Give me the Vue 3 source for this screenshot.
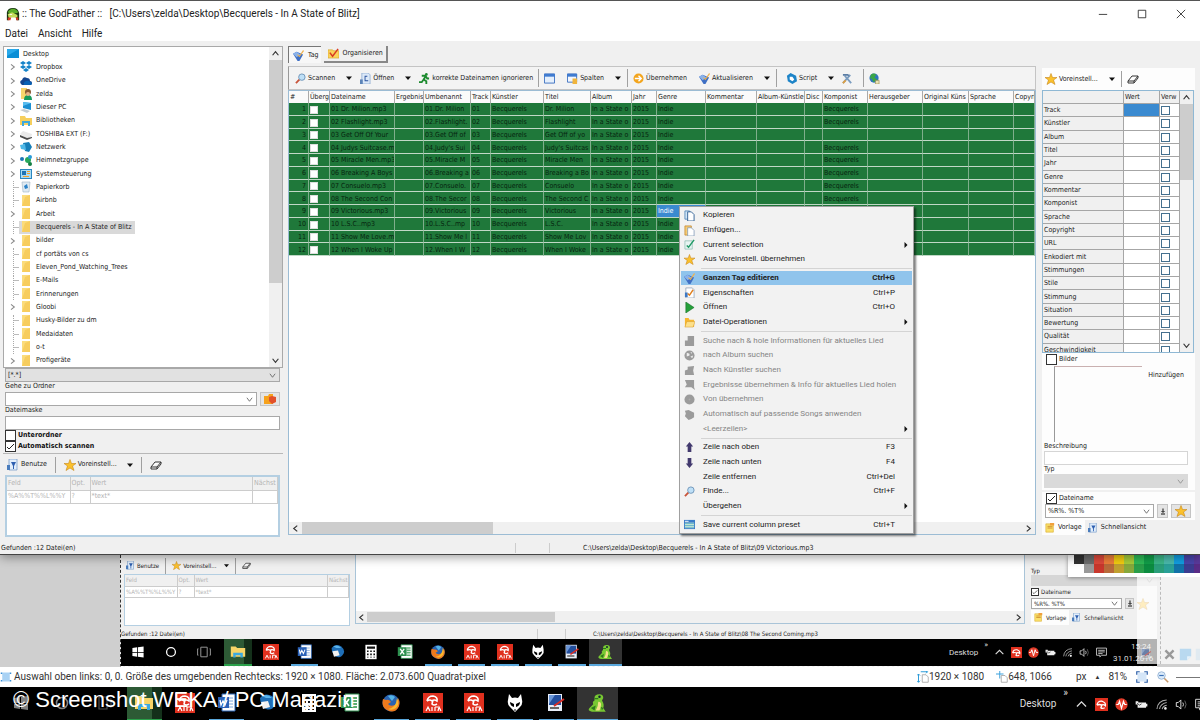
<script setup>
import { h, ref } from 'vue'

// small svg icon, drawn from the symbols at the top of the template
const Ico = (props) => h('svg', { class: 'ico', 'aria-hidden': 'true' }, [h('use', { href: '#i-' + props.name })])
Ico.props = ['name']

const tree = [
  { name: 'Dropbox', icon: 'dropbox', open: true },
  { name: 'OneDrive', icon: 'cloud', open: true },
  { name: 'zelda', icon: 'user', open: true },
  { name: 'Dieser PC', icon: 'pc', open: true },
  { name: 'Bibliotheken', icon: 'library', open: true },
  { name: 'TOSHIBA EXT (F:)', icon: 'drive', open: true },
  { name: 'Netzwerk', icon: 'network', open: true },
  { name: 'Heimnetzgruppe', icon: 'homegroup', open: true },
  { name: 'Systemsteuerung', icon: 'control', open: true },
  { name: 'Papierkorb', icon: 'bin' },
  { name: 'Airbnb', icon: 'folder' },
  { name: 'Arbeit', icon: 'folder', open: true },
  { name: 'Becquerels - In A State of Blitz', icon: 'folder', selected: true },
  { name: 'bilder', icon: 'folder', open: true },
  { name: 'cf portäts von cs', icon: 'folder' },
  { name: 'Eleven_Pond_Watching_Trees', icon: 'folder' },
  { name: 'E-Mails', icon: 'folder' },
  { name: 'Erinnerungen', icon: 'folder' },
  { name: 'Gloobi', icon: 'folder', open: true },
  { name: 'Husky-Bilder zu dm', icon: 'folder' },
  { name: 'Medaidaten', icon: 'folder' },
  { name: 'o-t', icon: 'folder' },
  { name: 'Profigeräte', icon: 'folder', open: true },
]

const columns = [
  { label: '#', width: 20 },
  { label: 'Überg', width: 21 },
  { label: 'Dateiname', width: 65 },
  { label: 'Ergebnis', width: 29 },
  { label: 'Umbenannt', width: 47 },
  { label: 'Track', width: 20 },
  { label: 'Künstler', width: 53 },
  { label: 'Titel', width: 47 },
  { label: 'Album', width: 41 },
  { label: 'Jahr', width: 25 },
  { label: 'Genre', width: 49 },
  { label: 'Kommentar', width: 51 },
  { label: 'Album-Künstle', width: 48 },
  { label: 'Disc', width: 18 },
  { label: 'Komponist', width: 45 },
  { label: 'Herausgeber', width: 55 },
  { label: 'Original Küns', width: 46 },
  { label: 'Sprache', width: 45 },
  { label: 'Copyri' },
]

const songs = [
  ['01 Dr. Milion.mp3', '01.Dr. Milion', 'Dr. Milion', true],
  ['02 Flashlight.mp3', '02.Flashlight.', 'Flashlight', true],
  ['03 Get Off Of Your', '03.Get Off of', 'Get Off of yo', false],
  ['04 Judys Suitcase.m', "04.Judy's Sui", "Judy's Suitcas", true],
  ['05 Miracle Men.mp3', '05.Miracle M', 'Miracle Men', true],
  ['06 Breaking A Boys', '06.Breaking a', 'Breaking a Bo', true],
  ['07 Consuelo.mp3', '07.Consuelo.', 'Consuelo', true],
  ['08 The Second Con', '08.The Secor', 'The Second C', true],
  ['09 Victorious.mp3', '09.Victorious', 'Victorious', false],
  ['10 L.S.C..mp3', '10.L.S.C..mp', 'L.S.C.', false],
  ['11 Show Me Love.m', '11.Show Me l', 'Show Me Lov', false],
  ['12 When I Woke Up', '12.When I W', 'When I Woke', false],
].map(([file, renamed, title, composer], i) => {
  const nr = String(i + 1).padStart(2, '0')
  return [file, '', renamed, nr, 'Becquerels', title, 'In a State o', '2015', 'Indie', '', '', '',
    composer ? 'Becquerels' : '', '', '', '', '']
})

const fields = ['Track', 'Künstler', 'Album', 'Titel', 'Jahr', 'Genre', 'Kommentar', 'Komponist', 'Sprache',
  'Copyright', 'URL', 'Enkodiert mit', 'Stimmungen', 'Stile', 'Stimmung', 'Situation', 'Bewertung', 'Qualität',
  'Geschwindigkeit']

const menu = [
  { label: 'Kopieren', icon: 'copy' },
  { label: 'Einfügen...', icon: 'paste' },
  { label: 'Current selection', icon: 'selection', sub: true },
  { label: 'Aus Voreinstell. übernehmen', icon: 'star' },
  { sep: true },
  { label: 'Ganzen Tag editieren', icon: 'tag', key: 'Ctrl+G', active: true },
  { label: 'Eigenschaften', icon: 'props', key: 'Ctrl+P' },
  { label: 'Öffnen', icon: 'play', key: 'Ctrl+O' },
  { label: 'Datei-Operationen', icon: 'openfolder', sub: true },
  { sep: true },
  { label: 'Suche nach & hole Informationen für aktuelles Lied', icon: 'g-doc', off: true },
  { label: 'nach Album suchen', icon: 'g-globe', off: true },
  { label: 'Nach Künstler suchen', icon: 'g-people', off: true },
  { label: 'Ergebnisse übernehmen & Info für aktuelles Lied holen', icon: 'g-search', off: true },
  { label: 'Von übernehmen', icon: 'g-disc', off: true },
  { label: 'Automatisch auf passende Songs anwenden', icon: 'g-gear', off: true },
  { label: '<Leerzeilen>', off: true, sub: true },
  { sep: true },
  { label: 'Zeile nach oben', icon: 'up', key: 'F3' },
  { label: 'Zeile nach unten', icon: 'down', key: 'F4' },
  { label: 'Zeile entfernen', key: 'Ctrl+Del' },
  { label: 'Finde...', icon: 'find', key: 'Ctrl+F' },
  { label: 'Übergehen', sub: true },
  { sep: true },
  { label: 'Save current column preset', icon: 'preset', key: 'Ctrl+T' },
]

const apps = [
  { icon: 'windows', name: 'Start' },
  { icon: 'circle', name: 'Cortana' },
  { icon: 'taskview', name: 'Taskansicht' },
  { icon: 'explorer', name: 'Explorer', state: 'files' },
  { icon: 'avira', name: 'Avira' },
  { icon: 'word', name: 'Word', state: 'running' },
  { icon: 'mail', name: 'Mail' },
  { icon: 'calc', name: 'Rechner' },
  { icon: 'excel', name: 'Excel' },
  { icon: 'firefox', name: 'Firefox', state: 'running' },
  { icon: 'avira', name: 'Avira', state: 'running' },
  { icon: 'avira', name: 'Avira', state: 'running' },
  { icon: 'alien', name: 'Foobar', state: 'running' },
  { icon: 'paint', name: 'Paint', state: 'running' },
  { icon: 'dino', name: 'GodFather', state: 'running current' },
]
const tray = ['caret', 'umbrella', 'pulse', 'battery', 'wifi', 'speaker', 'note']

const swatches = [
  '#333', '#6e6e6e', '#e04a3c', '#f0803a', '#f5cf10', '#a8cf3a', '#2ebd58', '#12a04a', '#3cb88a', '#4cbcae', '#12a0e4', '#4a46ac', '#5a3a9c',
  '#fff', '#999', '#c8372c', '#b86a3a', '#c0a030', '#86a83c', '#2a9e4a', '#0c8c40', '#2a9e7a', '#2aa098', '#1272a8', '#3c3c90', '#5a2c86',
]

const subfolders = ref(false)
const autoscan = ref(true)
const pictures = ref(false)
const filename = ref(true)
</script>

<template>
  <svg class="defs" aria-hidden="true">
    <symbol id="i-dino" viewBox="0 0 16 16"><path d="M6 4q0-3 4-3 3 0 3 3l-1 2q2 3 1 6l2 3H4q-4-1-2-3l3-3q-1-2 1-3z" fill="#78c832" /><path d="M9 7q3 0 2 4l-1 3H7q2-3 2-7z" fill="#f3e08a" /><path d="M3 12l4-2-1 4zM11 11l2 1-1 2z" fill="#2c7a1c" /><path d="M6 4h3v1H6z" fill="#2c7a1c" /><circle cx="10" cy="3" r="1" fill="#123" /></symbol>
    <symbol id="i-face" viewBox="0 0 16 16"><path d="M1 15V6q1-5 7-5t7 6v8h-3l-1-4H4l-1 4z" fill="#16330f" /><path d="M2 6q2-4 6-4t6 4l-2 1H4z" fill="#5cae2a" /><path d="M2 8l5-2 6 3v3H3z" fill="#c4dc5a" /><path d="M4 8h3v1H4z" fill="#fff" /><path d="M2 12h4l-1 3H2zM11 12h3v3h-2z" fill="#d83a24" /></symbol>
    <symbol id="i-desktop" viewBox="0 0 12 12"><path d="M0 1h12v9H0z" fill="#0c8fd6" /><path d="M0 1h12L0 8z" fill="#29a9ea" /></symbol>
    <symbol id="i-dropbox" viewBox="0 0 12 12"><path d="M3 0l3 2-3 2-3-2zM9 0l3 2-3 2-3-2zM3 4l3 2-3 2-3-2zM9 4l3 2-3 2-3-2zM6 7l3 2-3 2-3-2z" fill="#1583c9" /></symbol>
    <symbol id="i-cloud" viewBox="0 0 12 12"><path d="M1 9q-2-3 1-4 1-4 5-2 3 0 3 3 2 0 2 2t-2 2H2z" fill="#14468f" /><path d="M4 10q-1-3 2-4 3-1 4 1 2 0 2 2l-1 1z" fill="#0a62b4" /></symbol>
    <symbol id="i-user" viewBox="0 0 12 12"><path d="M1 0h6v11H1z" fill="#f8d66c" /><path d="M4 12q0-5 4-5t4 5z" fill="#179a5b" /><circle cx="8" cy="4" r="3" fill="#8a5a32" /><circle cx="8" cy="6" r="2" fill="#e8b48a" /></symbol>
    <symbol id="i-pc" viewBox="0 0 12 12"><path d="M3 1l8 1v7l-8-2z" fill="#1b8fd2" /><path d="M3 1l8 1-8 3z" fill="#58bdf0" /><path d="M0 9l4-1 6 2-3 2z" fill="#c4ccd2" /></symbol>
    <symbol id="i-library" viewBox="0 0 12 12"><path d="M0 1h5l1 2h6v7H0z" fill="#f6cf5d" /><path d="M2 11V6h8v5H8V8H4v3z" fill="#3ea8dc" /></symbol>
    <symbol id="i-drive" viewBox="0 0 12 12"><path d="M0 6l3-3 9 3-1 4-4 1z" fill="#e9e9e9" /><path d="M0 7l7 3 5-1v1l-5 2-7-3z" fill="#4a4a4a" /></symbol>
    <symbol id="i-network" viewBox="0 0 12 12"><path d="M3 2l6-1 3 5-3 5-4-1z" fill="#167fb9" /><path d="M0 4l5-1 1 6-5-1z" fill="#4fb9e8" /></symbol>
    <symbol id="i-homegroup" viewBox="0 0 12 12"><circle cx="2" cy="4" r="2" fill="#1b76b8" /><circle cx="8" cy="5" r="3" fill="#27a85b" /><circle cx="10" cy="9" r="2" fill="#147e42" /><circle cx="10" cy="2" r="2" fill="#2a9ad8" /></symbol>
    <symbol id="i-control" viewBox="0 0 12 12"><path d="M0 1h12v10H0z" fill="#2a86c0" /><path d="M1 2h10v8H1z" fill="#a8dcf4" /><path d="M2 3h4v4H2z" fill="#1e74b4" /><path d="M7 3h3v1H7zM7 5h3v1H7zM3 8h6v1H3z" fill="#f0a02c" /></symbol>
    <symbol id="i-bin" viewBox="0 0 12 12"><path d="M2 1h8L9 11H3z" fill="#dfeaf2" stroke="#9fb4c2" stroke-width=".6" /><path d="M4 5l3-2 1 4-3 1z" fill="#2d83c8" /></symbol>
    <symbol id="i-folder" viewBox="0 0 12 12"><path d="M2 0h8v11H2z" fill="#fbdc7c" /><path d="M5 2l5-2v11H2z" fill="#f7cd5e" /></symbol>
    <symbol id="i-tag" viewBox="0 0 12 12"><path d="M0 4l4-2 7 3-4 7H5z" fill="#3f6fc4" /><path d="M0 4l4-2 4 3-4 3z" fill="#8ab2ea" /><path d="M5 5l2 1 4-6 1 1-5 7-3-3z" fill="#f0b24c" /></symbol>
    <symbol id="i-organize" viewBox="0 0 12 12"><path d="M0 2h5l1 1h6v8H0z" fill="#fbd35c" stroke="#d09a1c" stroke-width=".6" /><path d="M2 5l3 4 6-8" fill="none" stroke="#d83a22" stroke-width="1.600" /></symbol>
    <symbol id="i-find" viewBox="0 0 12 12"><path d="M1 11l4-4" stroke="#c8543a" stroke-width="2" /><circle cx="7.500" cy="4.500" r="3.500" fill="#bfe0f7" stroke="#6d94b8" /></symbol>
    <symbol id="i-open" viewBox="0 0 12 12"><path d="M2 0h7l2 2v10H2z" fill="#dce9f8" stroke="#7a9cc8" stroke-width=".7" /><path d="M5 3h3v1H6v4h3v1H5V5z" fill="#27509c" /><path d="M0 7h3v5H0z" fill="#5c84b8" /></symbol>
    <symbol id="i-run" viewBox="0 0 12 12"><circle cx="8" cy="1.500" r="1.500" fill="#1c8a2e" /><path d="M3 3h4l2 3h2M7 4L5 7l3 2 0 3M5 7l-2 3H0" fill="none" stroke="#1c8a2e" stroke-width="2" /></symbol>
    <symbol id="i-window" viewBox="0 0 12 12"><path d="M.5 1h11v10H.5z" fill="#e4effc" stroke="#3a6fc0" /><path d="M0 1h12v3H0z" fill="#3f7bd0" /></symbol>
    <symbol id="i-columns" viewBox="0 0 12 12"><path d="M.5 1h10v9H.5z" fill="#f2f7fe" stroke="#3a6fc0" /><path d="M0 1h11v3H0z" fill="#3f7bd0" /><path d="M6 6h5v6H6z" fill="#f0b43c" /></symbol>
    <symbol id="i-accept" viewBox="0 0 12 12"><circle cx="6" cy="6" r="5.500" fill="#f3a51d" /><path d="M2 6h6M6 3l3 3-3 3" fill="none" stroke="#fff" stroke-width="1.500" /></symbol>
    <symbol id="i-script" viewBox="0 0 12 12"><path d="M1 3l4-3 6 3 1 6-5 3-5-3z" fill="#1d84c8" /><path d="M4 4l3 0 2 3-2 2-3-2z" fill="#fff" /></symbol>
    <symbol id="i-tools" viewBox="0 0 12 12"><path d="M1 11l8-9M3 3l7 8" stroke="#7a9cc0" stroke-width="2" /><path d="M1 1h6l1 3-2-1H1z" fill="#5a7ca4" /><path d="M1 11l3-3" stroke="#e0a040" stroke-width="2" /></symbol>
    <symbol id="i-globe" viewBox="0 0 12 12"><circle cx="5.500" cy="5.500" r="5" fill="#2f74c0" /><path d="M2 2q3-3 6 0l-2 3 3 2-4 3-2-4-2 0z" fill="#3aa648" /><path d="M7 8h4v4H7z" fill="#ece4b4" stroke="#8a7a3a" stroke-width=".6" /></symbol>
    <symbol id="i-star" viewBox="0 0 12 12"><path d="M6 .5l1.500 4H12L8.500 7l1.500 4.500L6 9l-4 2.500L3.500 7 0 4.500h4.500z" fill="#fbc12c" stroke="#c8861a" stroke-width=".6" /></symbol>
    <symbol id="i-eraser" viewBox="0 0 12 12"><path d="M1 8l4-5h6L7 8zM1 8v2h6l4-5V3M7 8v2" fill="#fff" stroke="#333" /></symbol>
    <symbol id="i-use" viewBox="0 0 12 12"><path d="M2 0h8v11H2z" fill="#e2eefb" stroke="#6c94c4" stroke-width=".7" /><path d="M4 3h5L7 7v3H6V7z" fill="#2d5fb0" /><path d="M0 6h3v5H0z" fill="#4a7cbc" /></symbol>
    <symbol id="i-copy" viewBox="0 0 12 12"><path d="M1 1h5v9H1z" fill="#cfe4f6" stroke="#3d77ae" stroke-width=".8" /><path d="M4 2h4l3 3v7H4z" fill="#fff" stroke="#2f5f94" /></symbol>
    <symbol id="i-paste" viewBox="0 0 12 12"><path d="M1 1h7v10H1z" fill="#f6cb74" stroke="#c0852c" stroke-width=".8" /><path d="M4 3h4l3 3v6H4z" fill="#fff" stroke="#7a94b4" stroke-width=".8" /></symbol>
    <symbol id="i-selection" viewBox="0 0 12 12"><path d="M1 2h8v9H1z" fill="#e8f4f2" stroke="#7cb4a8" stroke-width=".7" /><path d="M3 7l2 2 6-8" fill="none" stroke="#229a66" stroke-width="1.600" /></symbol>
    <symbol id="i-props" viewBox="0 0 12 12"><path d="M2 1h7l2 2v9H2z" fill="#fff" stroke="#8a9cb4" stroke-width=".8" /><path d="M1 6h3v5H1z" fill="#3c78c4" /><path d="M4 7l2 2 4-6" fill="none" stroke="#e08020" stroke-width="1.500" /></symbol>
    <symbol id="i-play" viewBox="0 0 12 12"><path d="M2 0l9 6-9 6z" fill="#25a03a" stroke="#146c24" stroke-width=".6" /></symbol>
    <symbol id="i-openfolder" viewBox="0 0 12 12"><path d="M1 1h4l1 2h5v8H1z" fill="#f7b62e" /><path d="M3 5h9l-2 6H1z" fill="#fde08a" stroke="#d0921c" stroke-width=".5" /></symbol>
    <symbol id="i-g-doc" viewBox="0 0 12 12"><path d="M4 1h7v11H1V6h3z" fill="#9b9b9b" /></symbol>
    <symbol id="i-g-globe" viewBox="0 0 12 12"><circle cx="6" cy="6" r="5.500" fill="#9b9b9b" /><path d="M3 3l3 1 0 2-3 1zM7 7l3-1-1 3zM7 2l2 1-1 1z" fill="#eee" /></symbol>
    <symbol id="i-g-people" viewBox="0 0 12 12"><path d="M4 2l7-1-1 5 1 5H1V6l3-1z" fill="#9b9b9b" /></symbol>
    <symbol id="i-g-search" viewBox="0 0 12 12"><path d="M1 1h10v8l1 3-4-3H1l2-3z" fill="#9b9b9b" /></symbol>
    <symbol id="i-g-disc" viewBox="0 0 12 12"><circle cx="6" cy="6" r="5.500" fill="#9b9b9b" /><circle cx="6" cy="6" r="1" fill="#aaa" /></symbol>
    <symbol id="i-g-gear" viewBox="0 0 12 12"><path d="M1 2l4-1 6 3v5l-3 2-3 1-4-4 1-3z" fill="#9b9b9b" /></symbol>
    <symbol id="i-up" viewBox="0 0 12 12"><path d="M6 0l4 5H8v6H4V5H2z" fill="#42396e" /></symbol>
    <symbol id="i-down" viewBox="0 0 12 12"><path d="M6 12l4-5H8V1H4v6H2z" fill="#42396e" /></symbol>
    <symbol id="i-preset" viewBox="0 0 12 12"><path d="M0 1h12v10H0z" fill="#3a7cc8" /><path d="M1 4h10v6H1z" fill="#d8ecd8" /><path d="M1 5h10M1 7h10M1 9h10" stroke="#5ab0c8" /><path d="M1 2h4v1H1z" fill="#fff" /></symbol>
    <symbol id="i-hearts" viewBox="0 0 12 12"><path d="M0 3h4l1-2h4v10H0z" fill="#f6a21c" /><path d="M5 4l3-1 4 1v5l-4 2-3-3z" fill="#e2502a" /></symbol>
    <symbol id="i-template" viewBox="0 0 12 12"><path d="M1 1h9v10H1z" fill="#fbe06a" stroke="#d8a82a" stroke-width=".7" /><path d="M3 4h6M3 6h6" stroke="#c8862a" /><path d="M6 0h5v3H6z" fill="#f0a03c" /></symbol>
    <symbol id="i-import" viewBox="0 0 12 12"><path d="M6 0v7M3 5l3 3 3-3M2 11h8" fill="none" stroke="#111" stroke-width="2" /></symbol>
    <symbol id="i-chev" viewBox="0 0 12 12"><path d="M3 2l5 4-5 4" fill="none" stroke="#888" stroke-width="1.600" /></symbol>
    <symbol id="i-tri" viewBox="0 0 12 12"><path d="M0 3h12L6 10z" fill="#111" /></symbol>
    <symbol id="i-sub" viewBox="0 0 12 12"><path d="M3 0l6 6-6 6z" fill="#111" /></symbol>
    <symbol id="i-sup" viewBox="0 0 12 12"><path d="M1 9l5-6 5 6" fill="none" stroke="#333" stroke-width="2" /></symbol>
    <symbol id="i-sdown" viewBox="0 0 12 12"><path d="M1 3l5 6 5-6" fill="none" stroke="#333" stroke-width="2" /></symbol>
    <symbol id="i-sleft" viewBox="0 0 12 12"><path d="M9 1L3 6l6 5" fill="none" stroke="#333" stroke-width="2" /></symbol>
    <symbol id="i-sright" viewBox="0 0 12 12"><path d="M3 1l6 5-6 5" fill="none" stroke="#333" stroke-width="2" /></symbol>
    <symbol id="i-min" viewBox="0 0 12 12"><path d="M1 6.500h10" stroke="#222" /></symbol>
    <symbol id="i-max" viewBox="0 0 12 12"><path d="M1.500 1.500h9v9h-9z" fill="none" stroke="#222" /></symbol>
    <symbol id="i-close" viewBox="0 0 12 12"><path d="M1 1l10 10M11 1L1 11" stroke="#222" /></symbol>

    <symbol id="i-windows" viewBox="0 0 20 20"><path d="M3 5l6-1v6H3zM10 4l7-1v7h-7zM3 11h6v5l-6-1zM10 11h7v6l-7-1z" fill="#fff" /></symbol>
    <symbol id="i-circle" viewBox="0 0 20 20"><circle cx="10" cy="10" r="5.500" fill="none" stroke="#fff" stroke-width="1.600" /></symbol>
    <symbol id="i-taskview" viewBox="0 0 20 20"><path d="M6 4h8v12H6zM3 6H2v8h1M17 6h1v8h-1" fill="none" stroke="#9a9a9a" stroke-width="1.200" /></symbol>
    <symbol id="i-explorer" viewBox="0 0 20 20"><path d="M1 3h6l2 2h10v11H1z" fill="#f8d568" /><path d="M4 17v-6h12v6h-3v-3H7v3z" fill="#3ba9e0" /></symbol>
    <symbol id="i-avira" viewBox="0 0 20 20"><path d="M0 0h20v20H0z" fill="#e0301e" /><path d="M4 8q1-5 6-5 5 1 4 5-3-2-5 0-2-2-5 0M10 7l-1 4q2 2 5 0" fill="none" stroke="#fff" stroke-width="1.600" /><path d="M3 18l2-4 2 4M9 14v4M12 14v4M12 14h3M15 18l1-4 2 4" fill="none" stroke="#fff" stroke-width="1.200" /></symbol>
    <symbol id="i-umbrella" viewBox="0 0 20 20"><path d="M0 0h20v20H0z" fill="#e0301e" /><path d="M3 11q1-7 8-6 6 2 5 7-3-3-6-1-3-2-7 0M11 10l-2 5q2 2 6 0" fill="none" stroke="#fff" stroke-width="2" /></symbol>
    <symbol id="i-word" viewBox="0 0 20 20"><path d="M5 1h13v17H5z" fill="#fff" stroke="#2b64b4" /><path d="M8 5h8M8 8h8M8 11h8M8 14h8" stroke="#7aa4dc" /><path d="M1 4h11v11H1z" fill="#2a62b8" /><path d="M3 7l1 5 2-4 2 4 2-5" fill="none" stroke="#fff" stroke-width="1.300" /></symbol>
    <symbol id="i-mail" viewBox="0 0 20 20"><path d="M2 5q5-6 12-2 5 4 3 9-3 6-9 4-6-4-6-11z" fill="#1f6fb8" /><path d="M3 9l7-1 2 6-7 2z" fill="#f2f2f2" /><path d="M4 3q6-3 10 2l-6 0z" fill="#5bb4ec" /></symbol>
    <symbol id="i-calc" viewBox="0 0 20 20"><path d="M3 1h14v18H3z" fill="#fff" /><path d="M5 3h10v3H5zM5 8h2v2H5zM9 8h2v2H9zM13 8h2v2h-2zM5 12h2v2H5zM9 12h2v2H9zM13 12h2v2h-2zM5 16h2v1H5zM9 16h2v1H9zM13 16h2v1h-2z" fill="#111" /></symbol>
    <symbol id="i-excel" viewBox="0 0 20 20"><path d="M5 1h14v17H5z" fill="#fff" stroke="#2c8a4c" /><path d="M12 5h5M12 8h5M12 11h5M12 14h5" stroke="#5cae74" stroke-width="2" /><path d="M1 4h11v11H1z" fill="#2e9150" /><path d="M4 6l5 7M9 6l-5 7" stroke="#fff" stroke-width="1.600" /></symbol>
    <symbol id="i-firefox" viewBox="0 0 20 20"><circle cx="10" cy="10" r="8.500" fill="#2a63b0" /><path d="M2 6q-2 8 4 11 7 4 11-2 3-5 0-10 0 5-3 7-5 2-7-1l3-2q-2-3-5-2z" fill="#ee7a1c" /><path d="M16 5q3 6-1 10-4 3-8 1 6-1 8-6z" fill="#f9b92e" /><path d="M7 3q4-2 7 1l-3 4z" fill="#53b3e6" /></symbol>
    <symbol id="i-alien" viewBox="0 0 20 20"><path d="M4 1l3 4q3-1 6 0l3-4 1 6q1 4-2 7l-5 5-5-5q-3-3-2-7z" fill="#fff" /><path d="M5 9l4 2v3q-4-1-4-5zM15 9l-4 2v3q4-1 4-5z" fill="#000" /><path d="M9 17h2" stroke="#000" /></symbol>
    <symbol id="i-paint" viewBox="0 0 20 20"><path d="M2 1h14v17H2z" fill="#e8eef8" /><path d="M3 2h12v10H3z" fill="#234f9e" /><path d="M3 2h6l-6 9z" fill="#6a96d8" /><path d="M8 13l10-7" stroke="#d82c24" stroke-width="2" /><path d="M4 15h9" stroke="#666" stroke-width="2" /></symbol>
    <symbol id="i-caret" viewBox="0 0 20 20"><path d="M3 13l7-7 7 7" fill="none" stroke="#ddd" stroke-width="2" /></symbol>
    <symbol id="i-pulse" viewBox="0 0 20 20"><circle cx="10" cy="10" r="9.500" fill="#e23a28" /><path d="M2 10h3l2-5 3 11 3-11 2 5h3" fill="none" stroke="#fff" stroke-width="1.800" /></symbol>
    <symbol id="i-battery" viewBox="0 0 20 20"><path d="M4 7h13v8H4zM17 9h2v4h-2zM1 5h4v5H1z" fill="#eee" /><path d="M3 8l4 3 3-2" stroke="#000" fill="none" /></symbol>
    <symbol id="i-wifi" viewBox="0 0 20 20"><path d="M3 17Q4 4 18 3M7 17q1-8 11-10M11 17q1-5 7-6" fill="none" stroke="#aaa" stroke-width="1.600" /><circle cx="16" cy="16" r="2" fill="#eee" /></symbol>
    <symbol id="i-speaker" viewBox="0 0 20 20"><path d="M2 7h3l4-4v14l-4-4H2z" fill="none" stroke="#ddd" stroke-width="1.500" /><path d="M12 7q2 3 0 6" fill="none" stroke="#ddd" stroke-width="1.500" /><path d="M15 4q4 6 0 12" fill="none" stroke="#666" stroke-width="1.500" /></symbol>
    <symbol id="i-note" viewBox="0 0 20 20"><path d="M1 2h18v13h-9l-3 3v-3H1zM4 6h12M4 9h12M4 12h8" fill="none" stroke="#ddd" stroke-width="1.500" /></symbol>
    <symbol id="i-frame" viewBox="0 0 16 16"><path d="M2 2h12v12H2z" fill="#d5e6f8" /><path d="M1 5V1h4M11 1h4v4M15 11v4h-4M5 15H1v-4" fill="none" stroke="#2d5fa8" stroke-width="1.600" /></symbol>
    <symbol id="i-area" viewBox="0 0 16 16"><path d="M3 2h10v12H3z" fill="#a9d2f4" /><path d="M1 2h2v2H1zM1 12h2v2H1zM13 2h2v2h-2zM13 12h2v2h-2z" fill="#3a90d8" /></symbol>
    <symbol id="i-size" viewBox="0 0 16 16"><path d="M2 4v11M0 6l2-2 2 2M0 13l2 2 2-2M5 1h9M12 0l2 1-2 2" fill="none" stroke="#2a9ad8" stroke-width="1.300" /><path d="M7 5h5l3 3v7H7z" fill="#fff" stroke="#999" /></symbol>
    <symbol id="i-pos" viewBox="0 0 16 16"><path d="M5 0v10M0 4h10" stroke="#3aa0dc" stroke-width="1.300" /><path d="M7 6h5l3 3v6H7z" fill="#fff" stroke="#999" /></symbol>
    <symbol id="i-zoomout" viewBox="0 0 16 16"><path d="M9 9l6 6" stroke="#c89868" stroke-width="2" /><circle cx="6" cy="6" r="5" fill="#dcecfa" stroke="#88a8cc" /><path d="M3 6h6" stroke="#3a70b8" stroke-width="1.600" /></symbol>
    <symbol id="i-cross" viewBox="0 0 16 16"><path d="M3 3l10 10M13 3L3 13" stroke="#999" stroke-width="3" /></symbol>
    <symbol id="i-page" viewBox="0 0 16 16"><path d="M1 1h14v9l-5 5H1z" fill="#b9d9f0" /><path d="M10 15v-5h5z" fill="#e6f2fb" /></symbol>
  </svg>

  <div class="screen">
    <main class="window">
      <header class="titlebar">
        <Ico name="face" class="logo" />
        <h1>:: The GodFather ::&nbsp;&nbsp; [C:\Users\zelda\Desktop\Becquerels - In A State of Blitz]</h1>
        <button aria-label="Minimieren"><Ico name="min" /></button>
        <button aria-label="Maximieren"><Ico name="max" /></button>
        <button aria-label="Schließen"><Ico name="close" /></button>
      </header>
      <nav class="menubar">
        <button>Datei</button><button>Ansicht</button><button>Hilfe</button>
      </nav>

      <div class="body">
        <aside class="left">
          <div class="treebox">
            <ul class="tree">
              <li class="root"><Ico name="desktop" /><span>Desktop</span></li>
              <li v-for="node in tree" :key="node.name">
                <Ico v-if="node.open" name="chev" class="twist" />
                <i v-else class="twist line"></i>
                <span class="node" :class="{ selected: node.selected }"><Ico :name="node.icon" />{{ node.name }}</span>
              </li>
            </ul>
            <div class="vscroll tall"><Ico name="sup" /><i class="thumb"></i><Ico name="sdown" /></div>
          </div>
          <select class="grey" aria-label="Filter"><option>[*.*]</option></select>
          <label for="goto">Gehe zu Ordner</label>
          <div class="row">
            <select id="goto"><option></option></select>
            <button class="push" aria-label="Favoriten"><Ico name="hearts" /></button>
          </div>
          <label for="mask">Dateimaske</label>
          <input id="mask" type="text">
          <label class="check"><input v-model="subfolders" type="checkbox">Unterordner</label>
          <label class="check"><input v-model="autoscan" type="checkbox">Automatisch scannen</label>
          <div class="mini-tools">
            <button><Ico name="use" />Benutze</button>
            <i class="vline"></i>
            <button class="wide"><Ico name="star" />Voreinstell...</button>
            <Ico name="tri" class="tri" />
            <i class="vline"></i>
            <button aria-label="Leeren"><Ico name="eraser" /></button>
          </div>
          <div class="rulebox">
            <table class="rules">
              <thead><tr><th class="c1">Feld</th><th class="c2">Opt.</th><th>Wert</th><th class="c4">Nächst</th></tr></thead>
              <tbody><tr><td>%A%%T%%L%%Y</td><td>?</td><td>*text*</td><td></td></tr></tbody>
            </table>
          </div>
        </aside>

        <section class="center">
          <div class="tabs">
            <button class="tab on"><Ico name="tag" />Tag</button>
            <button class="tab"><Ico name="organize" />Organisieren</button>
          </div>
          <div class="toolbar">
            <button><Ico name="find" />Scannen</button><Ico name="tri" class="tri" />
            <button><Ico name="open" />Öffnen</button><Ico name="tri" class="tri" />
            <button><Ico name="run" />korrekte Dateinamen ignorieren</button>
            <i class="vline"></i>
            <button aria-label="Fenster"><Ico name="window" /></button>
            <button class="lead"><Ico name="columns" />Spalten</button><Ico name="tri" class="tri" />
            <i class="vline"></i>
            <button><Ico name="accept" />Übernehmen</button>
            <button class="lead"><Ico name="tag" />Aktualisieren</button><Ico name="tri" class="tri" />
            <i class="vline"></i>
            <button class="script"><Ico name="script" />Script</button><Ico name="tri" class="tri" />
            <button aria-label="Werkzeuge"><Ico name="tools" /></button>
            <i class="vline far"></i>
            <button aria-label="Web"><Ico name="globe" /></button>
          </div>
          <div class="gridbox">
            <table class="songs">
              <colgroup>
                <col v-for="col in columns" :key="col.label" :style="col.width ? { width: col.width + 'px' } : null">
              </colgroup>
              <thead><tr><th v-for="col in columns" :key="col.label">{{ col.label }}</th></tr></thead>
              <tbody>
                <tr v-for="(song, i) in songs" :key="i">
                  <td class="nr">{{ i + 1 }}</td>
                  <td><input type="checkbox" class="box" :aria-label="'Übergehen ' + (i + 1)"></td>
                  <td v-for="(cell, c) in song" :key="c" :class="{ hot: i === 8 && c === 8 }">{{ cell }}</td>
                </tr>
              </tbody>
            </table>
            <div class="hscroll"><Ico name="sleft" /><i class="thumb"></i><Ico name="sright" /></div>
          </div>

          <ul class="context">
            <li v-for="(item, i) in menu" :key="i" :class="{ sep: item.sep, active: item.active }">
              <button v-if="!item.sep" :disabled="item.off">
                <span class="slot"><Ico v-if="item.icon" :name="item.icon" /></span>
                <span class="text">{{ item.label }}</span>
                <span v-if="item.key" class="key">{{ item.key }}</span>
                <Ico v-if="item.sub" name="sub" class="sub" />
              </button>
            </li>
          </ul>
        </section>

        <aside class="right">
          <div class="mini-tools">
            <button><Ico name="star" />Voreinstell...</button>
            <Ico name="tri" class="tri" />
            <i class="vline"></i>
            <button aria-label="Leeren"><Ico name="eraser" /></button>
          </div>
          <div class="fieldbox">
            <div class="clip">
              <table class="fields">
                <thead><tr><th></th><th class="c2">Wert</th><th class="c3">Verw</th></tr></thead>
                <tbody>
                  <tr v-for="(field, i) in fields" :key="field">
                    <th>{{ field }}</th>
                    <td :class="{ hot: i === 0 }"></td>
                    <td><input type="checkbox" class="box" :aria-label="field"></td>
                  </tr>
                </tbody>
              </table>
            </div>
            <div class="vscroll"><Ico name="sup" /><i class="thumb"></i><Ico name="sdown" /></div>
          </div>
          <div class="group">
            <label class="check"><input v-model="pictures" type="checkbox">Bilder</label>
            <div class="row">
              <div class="preview"></div>
              <button class="add">Hinzufügen</button>
            </div>
            <label for="desc">Beschreibung</label>
            <input id="desc" type="text">
            <label for="type">Typ</label>
            <select id="type" class="grey" disabled><option></option></select>
          </div>
          <div class="group">
            <label class="check"><input v-model="filename" type="checkbox">Dateiname</label>
            <div class="row">
              <select aria-label="Muster"><option>%R%. %T%</option></select>
              <button class="push small" aria-label="Einfügen"><Ico name="import" /></button>
              <button class="push" aria-label="Favorit"><Ico name="star" /></button>
            </div>
          </div>
          <div class="foottabs">
            <button class="on"><Ico name="template" />Vorlage</button>
            <button><Ico name="use" />Schnellansicht</button>
          </div>
        </aside>
      </div>

      <footer class="status">
        <span class="found">Gefunden :12 Datei(en)</span><i></i><i></i>
        <span class="path">C:\Users\zelda\Desktop\Becquerels - In A State of Blitz\09 Victorious.mp3</span>
      </footer>
    </main>

    <section class="canvas">
      <div class="capture">
        <div class="shot">
          <div class="shot-left">
            <div class="mini-tools">
              <button><Ico name="use" />Benutze</button>
              <i class="vline"></i>
              <button><Ico name="star" />Voreinstell...</button>
              <Ico name="tri" class="tri" />
              <i class="vline"></i>
              <button aria-label="Leeren"><Ico name="eraser" /></button>
            </div>
            <div class="rulebox">
              <table class="rules">
                <thead><tr><th class="c1">Feld</th><th class="c2">Opt.</th><th>Wert</th><th class="c4">Nächst</th></tr></thead>
                <tbody><tr><td>%A%%T%%L%%Y</td><td>?</td><td>*text*</td><td></td></tr></tbody>
              </table>
            </div>
          </div>
          <div class="shot-center">
            <div class="hscroll"><Ico name="sleft" /><i class="thumb"></i><Ico name="sright" /></div>
          </div>
          <div class="shot-right">
            <label for="type2">Typ</label>
            <select id="type2" class="grey" disabled><option></option></select>
            <label class="check"><input v-model="filename" type="checkbox">Dateiname</label>
            <div class="row">
              <select aria-label="Muster"><option>%R%. %T%</option></select>
              <button class="push small" aria-label="Einfügen"><Ico name="import" /></button>
              <Ico name="star" />
            </div>
            <div class="foottabs">
              <button class="on"><Ico name="template" />Vorlage</button>
              <button><Ico name="use" />Schnellansicht</button>
            </div>
          </div>
        </div>
        <div class="status">
          <span class="found">Gefunden :12 Datei(en)</span><i></i><i></i>
          <span class="path">C:\Users\zelda\Desktop\Becquerels - In A State of Blitz\08 The Second Coming.mp3</span>
        </div>
        <div class="taskbar">
          <div class="apps">
            <button v-for="(app, i) in apps" :key="i" :class="app.state" :aria-label="app.name"><Ico :name="app.icon" /></button>
          </div>
          <div class="tray">
            <span>Desktop</span><span class="more">»</span>
            <Ico v-for="name in tray" :key="name" :name="name" />
            <time>15:24<br>31.01.2016</time>
          </div>
        </div>
      </div>
      <div class="palette">
        <i v-for="(color, i) in swatches" :key="i" :style="{ background: color }"></i>
      </div>
      <div class="veil"><Ico name="paint" /></div>
      <div class="margin"><Ico name="cross" /><Ico name="page" /><Ico name="page" class="dim" /></div>
    </section>

    <div class="infobar">
      <Ico name="area" />
      <span class="info">Auswahl oben links: 0, 0. Größe des umgebenden Rechtecks: 1920 × 1080. Fläche: 2.073.600 Quadrat-pixel</span>
      <Ico name="size" /><span class="dims">1920 × 1080</span>
      <Ico name="pos" /><span class="coords">648, 1066</span>
      <span>px</span><span class="uptri">▲</span><span class="percent">81%</span>
      <Ico name="frame" /><Ico name="zoomout" class="zoomout" />
      <i class="slider"></i>
    </div>

    <footer class="taskbar big">
      <div class="apps">
        <button v-for="(app, i) in apps" :key="i" :class="app.state" :aria-label="app.name"><Ico :name="app.icon" /></button>
      </div>
      <div class="tray">
        <span>Desktop</span><span class="more">»</span>
        <Ico v-for="name in tray" :key="name" :name="name" />
      </div>
      <p class="credit">© Screenshot WEKA / PC Magazin</p>
    </footer>
  </div>
</template>

<style>
body {
  margin: 0;
  overflow-x: hidden;
}
</style>

<style scoped>
* {
  box-sizing: border-box;
}

.defs {
  position: absolute;
  width: 0;
  height: 0;
}

.screen {
  min-height: 100vh;
  background: #000;
  color: #222;
  font: 7px/9px "DejaVu Sans Condensed", "DejaVu Sans", sans-serif;
  overflow: hidden;
}

button,
input,
select {
  margin: 0;
  padding: 0;
  border: 0;
  border-radius: 0;
  background: none;
  color: inherit;
  font: inherit;
  appearance: none;
}

button {
  display: flex;
  align-items: center;
  white-space: nowrap;
}

ul {
  margin: 0;
  padding: 0;
  list-style: none;
}

.ico {
  flex: none;
  width: 12px;
  height: 12px;
}

.row {
  display: flex;
}

/* form controls */
input[type="text"],
select {
  display: block;
  width: 100%;
  height: 14px;
  border: 1px solid #a8a8a8;
  background-color: #fff;
}

select {
  padding-left: 2px;
  background-image: url("data:image/svg+xml,%3Csvg xmlns='http://www.w3.org/2000/svg' viewBox='0 0 8 8'%3E%3Cpath d='M1 2l3 4 3-4' fill='none' stroke='%23666'/%3E%3C/svg%3E");
  background-repeat: no-repeat;
  background-position: right 3px center;
  background-size: 7px 7px;
}

select.grey {
  background-color: #e1e1e1;
}

input[type="checkbox"] {
  flex: none;
  width: 11px;
  height: 11px;
  border: 1px solid #333;
  background: #fff;
}

input[type="checkbox"]:checked {
  background: #fff url("data:image/svg+xml,%3Csvg xmlns='http://www.w3.org/2000/svg' viewBox='0 0 9 9'%3E%3Cpath d='M1 5l2 2 5-5' fill='none' stroke='%23222'/%3E%3C/svg%3E");
}

.check {
  display: flex;
  align-items: center;
  gap: 2px;
}

.push {
  justify-content: center;
  flex: none;
  width: 20px;
  height: 14px;
  border: 1px solid #c4c4c4;
  background: #e4e4e4;
}

.vline {
  width: 1px;
  height: 16px;
  background: #a0a0a0;
}

.tri {
  width: 6px;
  height: 6px;
}

/* scrollbars */
.vscroll,
.hscroll {
  display: flex;
  align-items: center;
  background: #f0f0f0;
}

.vscroll {
  flex-direction: column;
  width: 13px;
}

.vscroll .ico,
.hscroll .ico {
  width: 7px;
  height: 7px;
  margin: 3px;
}

.thumb {
  background: #cdcdcd;
}

.vscroll .thumb {
  width: 100%;
  height: 76px;
  margin-bottom: auto;
}

.vscroll.tall .thumb {
  height: 223px;
}

.hscroll {
  height: 12px;
}

.hscroll .thumb {
  width: 191px;
  height: 12px;
  margin-right: auto;
}

/* main window */
.window {
  position: relative;
  z-index: 2;
  border-top: 1px solid #555;
  border-bottom: 1px solid #444;
  background: #fff;
  box-shadow: 0 2px 10px rgba(0, 0, 0, .4);
}

.titlebar {
  display: flex;
  align-items: center;
  height: 25px;
  padding-left: 6px;
  color: #222;
  font: 10px/14px Roboto, sans-serif;
}

.titlebar h1 {
  flex: 1;
  margin: 0 0 0 2px;
  font-size: 10px;
  font-weight: 400;
}

.titlebar .logo {
  width: 14px;
  height: 14px;
}

.titlebar button {
  justify-content: center;
  width: 39px;
}

.titlebar button .ico {
  width: 10px;
  height: 10px;
}

.menubar {
  display: flex;
  gap: 10px;
  height: 15px;
  padding-left: 5px;
  font: 10px/14px Roboto, sans-serif;
}

.body {
  display: flex;
  padding: 5px 3px 4px;
  background: #f0f0f0;
}

/* left column */
.left {
  flex: none;
  width: 280px;
}

.treebox {
  display: flex;
  border: 1px solid #a9a9a9;
  background: #fff;
}

.tree {
  flex: 1;
  display: grid;
  grid-template-rows: repeat(24, 1fr);
  height: 320px;
}

.tree li {
  display: flex;
  align-items: center;
  padding: 1px 0 0 5px;
  white-space: nowrap;
}

.tree .root {
  gap: 4px;
  padding-left: 3px;
}

.twist {
  width: 8px;
  height: 8px;
  margin-right: 2px;
}

.twist.line {
  height: 100%;
  margin: 0 -2px 0 4px;
  border-left: 1px dotted #aaa;
  background: linear-gradient(#bbb, #bbb) left center / 5px 1px no-repeat;
}

.node {
  display: flex;
  align-items: center;
  gap: 4px;
  height: 100%;
  padding: 0 3px 0 1px;
}

.node.selected {
  background: #d9d9d9;
}

.left > select,
.left > label,
.left > .row,
.left > input,
.left .rulebox {
  width: 275px;
  margin-left: 2px;
}

.left > label {
  display: block;
  height: 10px;
}

.left > .row {
  gap: 3px;
}

.left > .check {
  display: flex;
  height: 11px;
  color: #111;
  font-weight: 700;
}

.mini-tools {
  display: flex;
  align-items: center;
}

.mini-tools button {
  gap: 2px;
}

.left .mini-tools {
  height: 22px;
  margin-top: 1px;
  padding-left: 4px;
  border-top: 1px solid #b8b8b8;
}

.left .vline {
  margin: 0 8px;
}

.left .wide {
  padding-right: 10px;
}

.rulebox {
  height: 62px;
  border: 2px solid #b4cfe2;
  background: #fff;
}

.rules {
  width: 100%;
  table-layout: fixed;
  border-collapse: collapse;
  color: #b4b4b4;
  text-align: left;
}

.rules th,
.rules td {
  overflow: hidden;
  height: 13px;
  padding: 0 0 0 1px;
  border: 1px solid #ccc;
  border-top: 0;
  border-left: 0;
  font-weight: 400;
  white-space: nowrap;
}

.rules th {
  background: #f0f0f0;
}

.rules .c1 {
  width: 63px;
}

.rules .c2 {
  width: 20px;
}

.rules .c4 {
  width: 25px;
}

/* song list */
.center {
  position: relative;
  flex: 1;
  display: flex;
  flex-direction: column;
  min-width: 0;
  margin: 0 4px 2px 5px;
}

.tabs {
  display: flex;
  gap: 3px;
}

.tab {
  gap: 4px;
  height: 17px;
  padding: 0 3px 0 4px;
  border-right: 2px solid #888;
  border-bottom: 2px solid #888;
}

.tab.on {
  padding-right: 2px;
  border: 0;
  border-top: 1px solid #777;
  border-left: 1px solid #777;
  background: #f7f7f7;
}

.toolbar {
  display: flex;
  align-items: center;
  height: 24px;
  margin-top: 3px;
  padding-left: 6px;
  border: 1px solid #c4c4c4;
  border-left-color: #999;
  background: #f3f3f3;
  overflow: hidden;
}

.toolbar button {
  gap: 2px;
}

.toolbar button .ico,
.tab .ico {
  width: 11px;
  height: 11px;
}

.toolbar .tri {
  margin: 0 4px 0 11px;
}

.toolbar .tri + button {
  margin-left: 4px;
}

.toolbar .vline {
  height: 18px;
  margin: 0 5px;
}

.toolbar .tri + .vline {
  margin-left: 2px;
}

.toolbar .lead {
  margin-left: 12px;
}

.toolbar .script {
  margin-left: 4px;
}

.toolbar .vline.far {
  margin-left: 10px;
}

.gridbox {
  flex: 1;
  display: flex;
  flex-direction: column;
  border: 1px solid #9cbcd4;
  background: #fff;
}

.gridbox .hscroll {
  margin-top: auto;
}

.songs {
  width: 100%;
  height: 165px;
  table-layout: fixed;
  border-collapse: separate;
  border-spacing: 0;
  text-align: left;
}

.songs th {
  height: 12px;
  border-right: 1px solid #aaa;
  background: #fafafa;
  font-weight: 400;
}

.songs th,
.songs td {
  overflow: hidden;
  padding: 0 0 0 1px;
  white-space: nowrap;
}

.songs td {
  padding-top: 2px;
  border-right: 1px solid #7fae8c;
  border-bottom: 1px solid #c0d8c6;
  background: #1f783a;
  color: #06240f;
}

.songs .nr {
  padding-right: 2px;
  text-align: right;
}

.songs .box {
  display: block;
  width: 8px;
  height: 8px;
  border-color: #ddd;
}

.songs .hot {
  background: #3a8ad0;
  color: #fff;
}

/* context menu */
.context {
  position: absolute;
  top: 160px;
  left: 391px;
  display: flex;
  flex-direction: column;
  width: 235px;
  height: 328px;
  padding: 1px;
  border: 1px solid #a0a0a0;
  background: #f2f2f2;
  box-shadow: 2px 2px 2px rgba(0, 0, 0, .5);
  color: #222;
  font: 8px/10px Roboto, sans-serif;
}

.context li {
  flex: 1;
  display: flex;
}

.context .sep {
  flex: none;
  height: 4px;
  margin-left: 20px;
  background: linear-gradient(#d4d4d4, #d4d4d4) center / 100% 1px no-repeat;
}

.context .active {
  background: #90c4ec;
  font-weight: 700;
}

.context button {
  width: 100%;
}

.context button:disabled {
  color: #858585;
}

.slot {
  display: flex;
  width: 22px;
  padding-left: 3px;
}

.slot .ico {
  width: 11px;
  height: 11px;
}

.text {
  flex: 1;
  text-align: left;
}

.key {
  margin-right: 17px;
}

.sub {
  width: 6px;
  height: 6px;
  margin-right: 3px;
}

/* right column */
.right {
  flex: none;
  width: 157px;
  padding: 22px 0 0 2px;
}

.right > .mini-tools {
  width: 153px;
  height: 22px;
  padding-left: 3px;
  background: #fdfdfd;
}

.right .tri {
  margin: 0 6px 0 11px;
}

.right .vline {
  margin-right: 5px;
}

.fieldbox {
  display: flex;
  width: 152px;
  height: 263px;
  border: 1px solid #8fb8d4;
  background: #fff;
}

.fieldbox .clip {
  flex: 1;
  overflow: hidden;
}

.fields {
  width: 100%;
  height: 266px;
  table-layout: fixed;
  border-collapse: separate;
  border-spacing: 0;
  text-align: left;
}

.fields th,
.fields td {
  overflow: hidden;
  padding: 1px 0 0 1px;
  border-right: 1px solid #a6a6a6;
  border-bottom: 1px solid #a6a6a6;
  font-weight: 400;
  white-space: nowrap;
}

.fields th {
  background: #f0f0f0;
}

.fields thead th {
  height: 13px;
}

.fields .c2 {
  width: 36px;
}

.fields .c3 {
  width: 20px;
}

.fields .hot {
  background: #3a8ad0;
}

.fields .box {
  display: block;
  width: 9px;
  height: 9px;
  border-color: #44708f;
}

.group {
  width: 153px;
  padding: 0 7px 2px 2px;
  background: #fdfdfd;
}

.group .check {
  margin-left: 2px;
}

.group .preview {
  flex: 1;
  height: 76px;
  margin: 1px 2px 0 10px;
  border-top: 1px solid #c9b0b0;
  border-left: 1px solid #999;
}

.group .add {
  height: 20px;
  padding: 0 4px;
}

.group label {
  display: block;
  height: 9px;
}

.group .check {
  display: flex;
  height: 12px;
}

.group input[type="text"] {
  border-color: #d5d5d5;
}

.group select.grey {
  border-color: #ccc;
  background-color: #ccc;
}

.group + .group {
  margin-top: 2px;
  padding-right: 4px;
}

.group + .group .row {
  gap: 3px;
  padding-left: 1px;
}

.right .small {
  width: 11px;
}

.small .ico {
  width: 6px;
  height: 7px;
}

.foottabs {
  display: flex;
}

.foottabs button {
  gap: 3px;
  height: 15px;
  padding: 0 3px;
}

.foottabs .on {
  background: #fdfdfd;
}

.foottabs .ico {
  width: 10px;
  height: 10px;
}

/* status line */
.status {
  display: flex;
  align-items: center;
  height: 13px;
  padding: 1px 0 0 1px;
  background: #f0f0f0;
}

.status .found {
  width: 514px;
}

.status i {
  width: 34px;
  height: 10px;
  border-left: 1px solid #ccc;
}

/* image editor behind the window */
.canvas {
  position: relative;
  z-index: 1;
  display: flex;
  padding-left: 120px;
  padding-right: 43px;
  background: #cfcfcf;
}

.capture {
  flex: 1;
  min-width: 0;
  border-left: 1px dashed #333;
  border-bottom: 1px dashed #fff;
  background: #f0f0f0;
  font-size: 6px;
  line-height: 8px;
}

.shot {
  display: flex;
  height: 72px;
  padding-left: 3px;
}

.shot-left {
  width: 226px;
  padding-top: 2px;
}

.shot-left .mini-tools {
  height: 17px;
  padding-left: 2px;
}

.shot-left .mini-tools .ico {
  width: 9px;
  height: 9px;
}

.shot-left .mini-tools .tri {
  width: 5px;
  height: 5px;
  margin-left: 8px;
}

.shot-left .vline {
  margin: 0 6px;
}

.shot-left .rulebox {
  height: 52px;
  border-width: 1px;
}

.shot-left .rules th,
.shot-left .rules td {
  height: 11px;
}

.shot-left .rules .c1 {
  width: 52px;
}

.shot-left .rules .c2 {
  width: 17px;
}

.shot-left .rules .c4 {
  width: 21px;
}

.shot-center {
  flex: 1;
  display: flex;
  align-items: flex-end;
  margin: 0 3px 3px 5px;
  border: 1px solid #a9c4d8;
  border-top: 0;
  background: #fff;
}

.shot-center .hscroll {
  flex: 1;
}

.shot-center .hscroll .ico {
  margin: 2px;
}

.shot-center .thumb {
  width: 188px;
  height: 10px;
}

.shot-right {
  width: 129px;
  padding: 12px 0 0 3px;
}

.shot-right > label {
  display: block;
  height: 8px;
}

.shot-right > .check {
  display: flex;
  height: 12px;
}

.shot-right input[type="checkbox"] {
  width: 8px;
  height: 8px;
}

.shot-right select {
  height: 11px;
}

.shot-right .grey {
  border-color: #ccc;
  background-color: #ccc;
}

.shot-right .row {
  gap: 3px;
}

.shot-right .row select {
  width: 91px;
}

.shot-right .small {
  width: 9px;
  height: 11px;
}

.shot-right .foottabs .ico {
  width: 9px;
  height: 9px;
}

.capture .status {
  height: 12px;
  padding: 2px 0 0;
}

.capture .found {
  width: 416px;
}

.capture .status i {
  width: 28px;
}

.palette {
  position: absolute;
  top: 0;
  right: 0;
  display: grid;
  grid-template-columns: repeat(13, 10px);
  grid-auto-rows: 9px;
  width: 132px;
  height: 22px;
  padding-left: 6px;
  background: #fff;
  box-shadow: 0 1px 4px rgba(0, 0, 0, .4);
  overflow: hidden;
}

.veil,
.margin {
  position: absolute;
  bottom: 3px;
  top: 22px;
  display: flex;
  align-items: flex-end;
}

.veil {
  right: 40px;
  width: 23px;
  padding: 0 3px 4px;
  background: rgba(255, 255, 255, .7);
}

.veil .ico {
  opacity: .5;
}

.margin {
  right: 0;
  gap: 3px;
  width: 40px;
  padding: 0 0 3px 2px;
  border-left: 1px dashed #bbb;
  background: #f2f2f2;
}

.margin .ico {
  width: 13px;
  height: 13px;
}

.dim {
  opacity: .3;
}

/* taskbars */
.taskbar {
  position: relative;
  display: flex;
  justify-content: space-between;
  height: 27px;
  background: #000;
  color: #ddd;
  font: 8px/12px Roboto, sans-serif;
}

.apps {
  display: grid;
  grid-template-columns: repeat(15, 1fr);
  width: 501px;
}

.apps button {
  justify-content: center;
  margin: 0 3px;
  border-bottom: 2px solid transparent;
}

.apps .ico {
  width: 16px;
  height: 16px;
}

.apps .running {
  border-color: #5aa8dc;
}

.apps .files {
  border-color: #2aa04a;
  background: linear-gradient(90deg, #2d5a35 72%, #14301a 72%);
}

.apps .current {
  margin: 0;
  background: #333;
}

.tray {
  display: flex;
  align-items: center;
  gap: 6px;
  padding-right: 6px;
}

.tray .ico {
  width: 11px;
  height: 11px;
}

.tray .more {
  align-self: flex-start;
}

.tray time {
  width: 38px;
  text-align: right;
}

.taskbar.big {
  height: 34px;
  font-size: 10px;
}

.big .apps {
  width: 618px;
}

.big .apps .ico {
  width: 20px;
  height: 20px;
}

.big .apps button:nth-child(-n+3) {
  opacity: .5;
}

.big .tray {
  gap: 7px;
  margin-right: -8px;
  padding: 0;
}

.big .tray .ico {
  width: 13px;
  height: 13px;
}

.credit {
  position: absolute;
  left: 13px;
  bottom: 8px;
  margin: 0;
  color: #fff;
  font: 22px/26px "Liberation Sans", Arial, sans-serif;
}

.infobar {
  display: flex;
  align-items: center;
  height: 20px;
  background: #fff;
  color: #333;
  font: 10px/14px Roboto, sans-serif;
}

.infobar .info {
  flex: 1;
  margin-left: 2px;
}

.infobar .dims {
  margin-right: 12px;
}

.infobar .coords {
  margin-right: 24px;
}

.uptri {
  margin: 0 8px;
  font-size: 6px;
}

.infobar .percent {
  margin-right: 9px;
}

.infobar .zoomout {
  margin: 0 7px 0 9px;
}

.slider {
  width: 24px;
  height: 1px;
  background: #777;
}
</style>
